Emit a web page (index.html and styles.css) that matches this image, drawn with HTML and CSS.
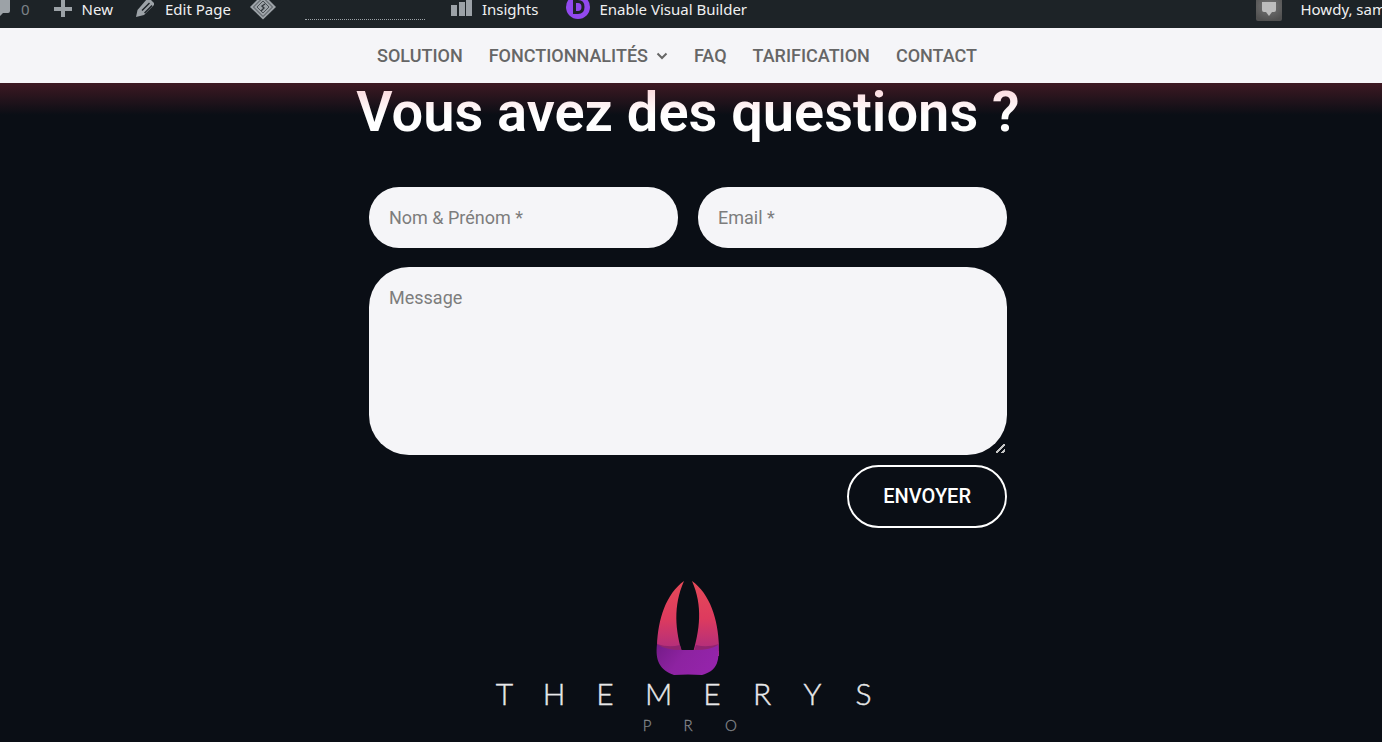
FILE: index.html
```html
<!DOCTYPE html>
<html lang="fr">
<head>
<meta charset="utf-8">
<meta name="viewport" content="width=device-width, initial-scale=1">
<title>Themerys Pro</title>
<link rel="stylesheet" href="styles.css">
</head>
<body>
<div class="admin-bar">
  <a class="item comments" href="#"><svg class="icon" width="18" height="28" viewBox="0 0 18 28"><path d="M0 0h18v11q0 2-2 2h-5l-5 5v-5H0z"/></svg><span class="count">0</span></a>
  <a class="item new" href="#"><svg class="icon" width="18" height="28" viewBox="0 0 18 28"><path d="M7 0h4v7h7v4h-7v6H7v-6H0V7h7z"/></svg><span>New</span></a>
  <a class="item edit" href="#"><svg class="icon" width="20" height="28" viewBox="0 0 20 28"><path fill-rule="evenodd" d="M1 17l1.500-7L12-1h3l4 4v2L9 15zM6.500 10l1 1L15 3.500l-1-1zM9 12.500l1 1 7.500-7.500-1-1z"/></svg><span>Edit Page</span></a>
  <a class="item divi" href="#" aria-label="Cache"><svg width="26" height="28" viewBox="0 0 26 28"><path fill="#9ca2a7" d="M13-6l13 13-13 12.500L0 7z"/><path fill="none" stroke="#4b5156" d="M13-2.500L22.500 7 13 16.500 3.500 7zM13 1l6 6-6 6-6-6z"/><path fill="none" stroke="#33393e" stroke-width="1.400" d="M15 4l-3 2 2 2-3 3"/></svg></a>
  <a class="item stats" href="#" aria-label="Stats"></a>
  <a class="item insights" href="#"><svg class="icon" width="22" height="28" viewBox="0 0 22 28"><path d="M0 5h6v11H0zM8 2h6v14H8zM15-2h6v18h-6z"/></svg><span>Insights</span></a>
  <a class="item builder" href="#"><svg width="24" height="28" viewBox="0 0 24 28"><circle cx="12" cy="7" r="12" fill="#9249ee"/><path fill="none" stroke="#1d2327" stroke-width="3" d="M8.500 1.500h3.500q5 0 5 5.500t-5 5.500H8.500z"/></svg><span>Enable Visual Builder</span></a>
  <a class="item account" href="#"><svg width="26" height="28" viewBox="0 0 26 28"><defs><radialGradient id="av" cx=".5" cy=".3" r=".7"><stop stop-color="#777"/><stop offset="1" stop-color="#505050"/></radialGradient></defs><path fill="url(#av)" d="M0 0h26v19q0 2-2 2H2q-2 0-2-2z"/><path fill="#bdbdbd" d="M6 2h14v8q0 2-2 2h-2l-3 4-3-4H8q-2 0-2-2z"/></svg><span>Howdy, sam</span></a>
</div>
<header class="site-header">
  <nav class="menu">
    <a href="#">SOLUTION</a>
    <a href="#">FONCTIONNALITÉS<svg class="chevron" width="12" height="10" viewBox="0 0 12 10"><path d="M1.500 1.500L6 6l4.500-4.500"/></svg></a>
    <a href="#">FAQ</a>
    <a href="#">TARIFICATION</a>
    <a href="#">CONTACT</a>
  </nav>
</header>
<main class="contact">
  <h1>Vous avez des questions ?</h1>
  <form class="form">
    <input class="field" type="text" placeholder="Nom &amp; Prénom *" aria-label="Nom &amp; Prénom">
    <input class="field" type="email" placeholder="Email *" aria-label="Email">
    <textarea class="field message" placeholder="Message" aria-label="Message"></textarea>
    <button class="send" type="submit">ENVOYER</button>
  </form>
  <svg class="logo" width="390" height="160" viewBox="0 0 390 160" role="img" aria-label="Themerys Pro">
    <defs>
      <linearGradient id="claw" x1="0" y1="0" x2="0" y2="1"><stop stop-color="#e64a58"/><stop offset=".5" stop-color="#dd3b5e"/><stop offset="1" stop-color="#a82b83"/></linearGradient>
      <linearGradient id="base" x1="0" y1="0" x2="1" y2=".4"><stop stop-color="#741b87"/><stop offset=".5" stop-color="#8d23a1"/><stop offset="1" stop-color="#9424aa"/></linearGradient>
    </defs>
    <path fill="url(#claw)" d="M191 6C173 19 165 44 164 71v10h26C182 55 180 31 191 6zM199 6C217 19 225 44 226 71v10h-27C207 55 210 31 199 6z"/>
    <path fill="#92246f" d="M164 69Q176 73 187 70L189 76H164zM226 69Q214 73 203 70L201 76H226z"/>
    <path fill="url(#base)" d="M164 69Q172 75 189 75H202Q218 75 225 70C227 88 223 96 209 100Q195 99 181 100C167 95 162 86 164 69z"/>
    <text class="wordmark" y="129.500" x="11.500 61 112 165.500 219 269 319.500 370.500">THEMERYS</text>
    <text class="tagline" y="156" x="154 195 238">PRO</text>
  </svg>
</main>
</body>
</html>
```
FILE: styles.css
```css
* { box-sizing: border-box; }

body {
  margin: 0;
  background: #0a0e15;
  font-family: Roboto, "Liberation Sans", sans-serif;
  overflow-x: hidden;
}

.admin-bar {
  display: flex;
  height: 28px;
  overflow: hidden;
  background: #1d2327;
  font-family: "Noto Sans", "Open Sans", sans-serif;
  font-size: 15px;
  line-height: 18px;
}

.item {
  display: flex;
  flex: none;
  gap: 10px;
  color: #f0f0f1;
  text-decoration: none;
  white-space: nowrap;
}

.icon { fill: #9ca2a7; }
.comments { margin-left: -8px; gap: 11px; }
.count { color: #7c8287; }
.new { margin-left: 24px; }
.edit { margin-left: 22px; }
.divi { margin-left: 19px; }
.stats {
  width: 120px;
  height: 20px;
  margin-left: 29px;
  border-bottom: 1px dotted #9ca2a7;
}
.insights { margin-left: 26px; }
.insights, .builder { gap: 9px; }
.builder { margin-left: 28px; }
.account { margin-left: auto; margin-right: -4px; gap: 18px; }

.site-header {
  position: relative;
  background: #f5f5f8;
}

.site-header::after {
  content: "";
  position: absolute;
  top: 100%;
  left: 0;
  right: 0;
  height: 32px;
  background: linear-gradient(rgba(235, 60, 80, 0.23), rgba(235, 60, 80, 0));
  pointer-events: none;
}

.menu {
  display: flex;
  justify-content: center;
  gap: 26px;
  padding: 16px 28px 15px 0;
  font-size: 18px;
  font-weight: 500;
  line-height: 24px;
}

.menu a { color: #666; text-decoration: none; }

.chevron {
  margin-left: 8px;
  fill: none;
  stroke: #666;
  stroke-width: 2;
}

.contact {
  display: flex;
  flex-direction: column;
  align-items: center;
  padding-right: 6px;
}

h1 {
  margin: 0;
  color: #fff;
  font-size: 56px;
  font-weight: 600;
  line-height: 58px;
}

.form {
  display: grid;
  grid-template-columns: 1fr 1fr;
  gap: 19px 20px;
  width: 100%;
  max-width: 638px;
  margin-top: 46px;
}

.field {
  width: 100%;
  min-width: 0;
  padding: 20px;
  border: 0;
  border-radius: 30px;
  background: #f5f5f8;
  color: #333;
  font: 18px/21px Roboto, "Liberation Sans", sans-serif;
}

.field::placeholder { color: #7d7d7d; opacity: 1; }

.message {
  grid-column: 1 / -1;
  height: 188px;
  border-radius: 40px;
  resize: vertical;
}

.message::-webkit-resizer {
  background: linear-gradient(135deg, transparent 44%, #c4c4c4 44%, #c4c4c4 56%, transparent 56%, transparent 76%, #c4c4c4 76%, #c4c4c4 90%, transparent 90%) 4px 4px / 9px 9px no-repeat;
}

.send {
  grid-column: 1 / -1;
  justify-self: end;
  margin-top: -9px;
  padding: 17px 34px;
  border: 2px solid #fff;
  border-radius: 32px;
  background: transparent;
  color: #fff;
  font: 500 20px/25px Roboto, "Liberation Sans", sans-serif;
}

.logo { margin-top: 47px; }

.wordmark, .tagline {
  font-family: Lato, sans-serif;
  font-weight: 300;
  text-anchor: middle;
}

.wordmark {
  fill: #e8e8ea;
  stroke: #e8e8ea;
  stroke-width: 0.4;
  font-size: 30px;
}

.tagline {
  fill: #85888c;
  stroke: #85888c;
  stroke-width: 0.3;
  font-size: 15px;
}
```
